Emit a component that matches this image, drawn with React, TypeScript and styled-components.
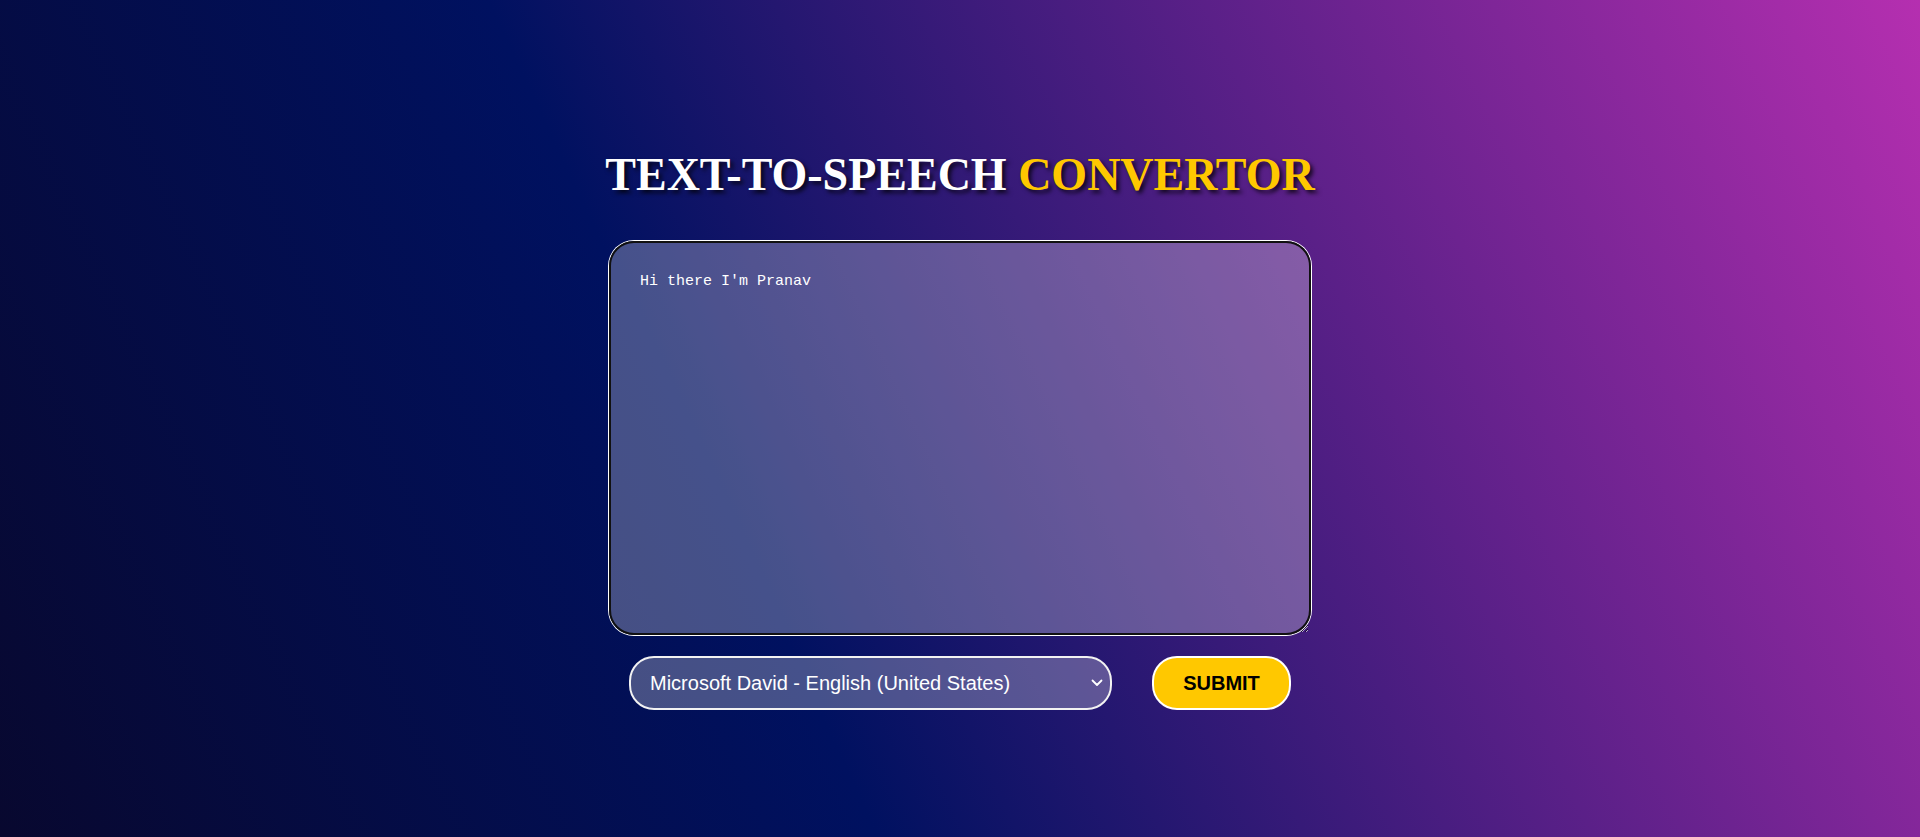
import { useState } from "react";
import styled, { createGlobalStyle } from "styled-components";

const GlobalStyle = createGlobalStyle`
	html, body {
		margin: 0;
		padding: 0;
		height: 100%;
	}

	body {
		background: linear-gradient(65deg, #08082f 0%, #001160 38%, #b52fb0 100%);
		background-attachment: fixed;
		font-family: "Liberation Sans", Arial, sans-serif;
		overflow: hidden;
	}
`;

const Page = styled.main`
	align-items: center;
	box-sizing: border-box;
	display: flex;
	flex-direction: column;
	height: 100vh;
	padding-top: 147px;
	width: 100%;
`;

const Title = styled.h1`
	color: #fff;
	font-family: "Liberation Serif", "Times New Roman", serif;
	font-size: 46px;
	font-weight: bold;
	line-height: 56px;
	margin: 0 0 38px;
	text-shadow: 3px 3px 4px rgba(0, 0, 0, 0.75);

	span {
		color: #ffc800;
	}
`;

const TextBox = styled.textarea`
	background: rgba(255, 255, 255, 0.27);
	border: 2px solid #111;
	border-radius: 25px;
	box-shadow: 0 0 0 1px #fff;
	box-sizing: border-box;
	color: #fff;
	font-family: "Liberation Mono", "DejaVu Sans Mono", monospace;
	font-size: 15px;
	height: 394px;
	line-height: 20px;
	outline: none;
	padding: 29px 29px;
	width: 702px;

	&:focus {
		outline: none;
	}
`;

const Controls = styled.div`
	align-items: center;
	display: flex;
	gap: 40px;
	margin-top: 21px;
`;

const SelectWrap = styled.div`
	display: flex;
	position: relative;
`;

const VoiceSelect = styled.select`
	appearance: none;
	background: rgba(255, 255, 255, 0.27);
	border: 2px solid #f2f2f2;
	border-radius: 25px;
	box-sizing: border-box;
	color: #fff;
	font-family: "Liberation Sans", Arial, sans-serif;
	font-size: 20px;
	height: 54px;
	outline: none;
	padding: 0 30px 0 19px;
	width: 483px;

	option {
		background: #2a2a6a;
		color: #fff;
	}
`;

const Chevron = styled.svg`
	pointer-events: none;
	position: absolute;
	right: 9px;
	top: 50%;
	transform: translateY(-50%);
`;

const SubmitButton = styled.button`
	background: #ffc800;
	border: 2px solid #fff;
	border-radius: 25px;
	box-sizing: border-box;
	color: #000;
	cursor: pointer;
	font-family: "Liberation Sans", Arial, sans-serif;
	font-size: 20px;
	font-weight: bold;
	height: 54px;
	width: 139px;
`;

const voices = [
	"Microsoft David - English (United States)",
	"Microsoft Mark - English (United States)",
	"Microsoft Zira - English (United States)"
];

export default function App() {
	const [ text, setText ] = useState("Hi there I'm Pranav ");
	const [ voice, setVoice ] = useState(voices[0]);

	return (
		<>
			<GlobalStyle />
			<Page>
				<Title>
					TEXT-TO-SPEECH <span>CONVERTOR</span>
				</Title>
				<TextBox
					autoFocus
					value={ text }
					onChange={ e => setText(e.target.value) }
					onFocus={ e => {
						const len = e.target.value.length;
						e.target.setSelectionRange(len, len);
					} }
				/>
				<Controls>
					<SelectWrap>
						<VoiceSelect value={ voice } onChange={ e => setVoice(e.target.value) }>
							{ voices.map(v => (
								<option key={ v } value={ v }>{ v }</option>
							)) }
						</VoiceSelect>
						<Chevron width="12" height="8" viewBox="0 0 12 8">
							<path d="M1.5 1.5 L6 6 L10.5 1.5" fill="none" stroke="#fff" strokeWidth="1.8" strokeLinecap="round" strokeLinejoin="round" />
						</Chevron>
					</SelectWrap>
					<SubmitButton>SUBMIT</SubmitButton>
				</Controls>
			</Page>
		</>
	);
}
